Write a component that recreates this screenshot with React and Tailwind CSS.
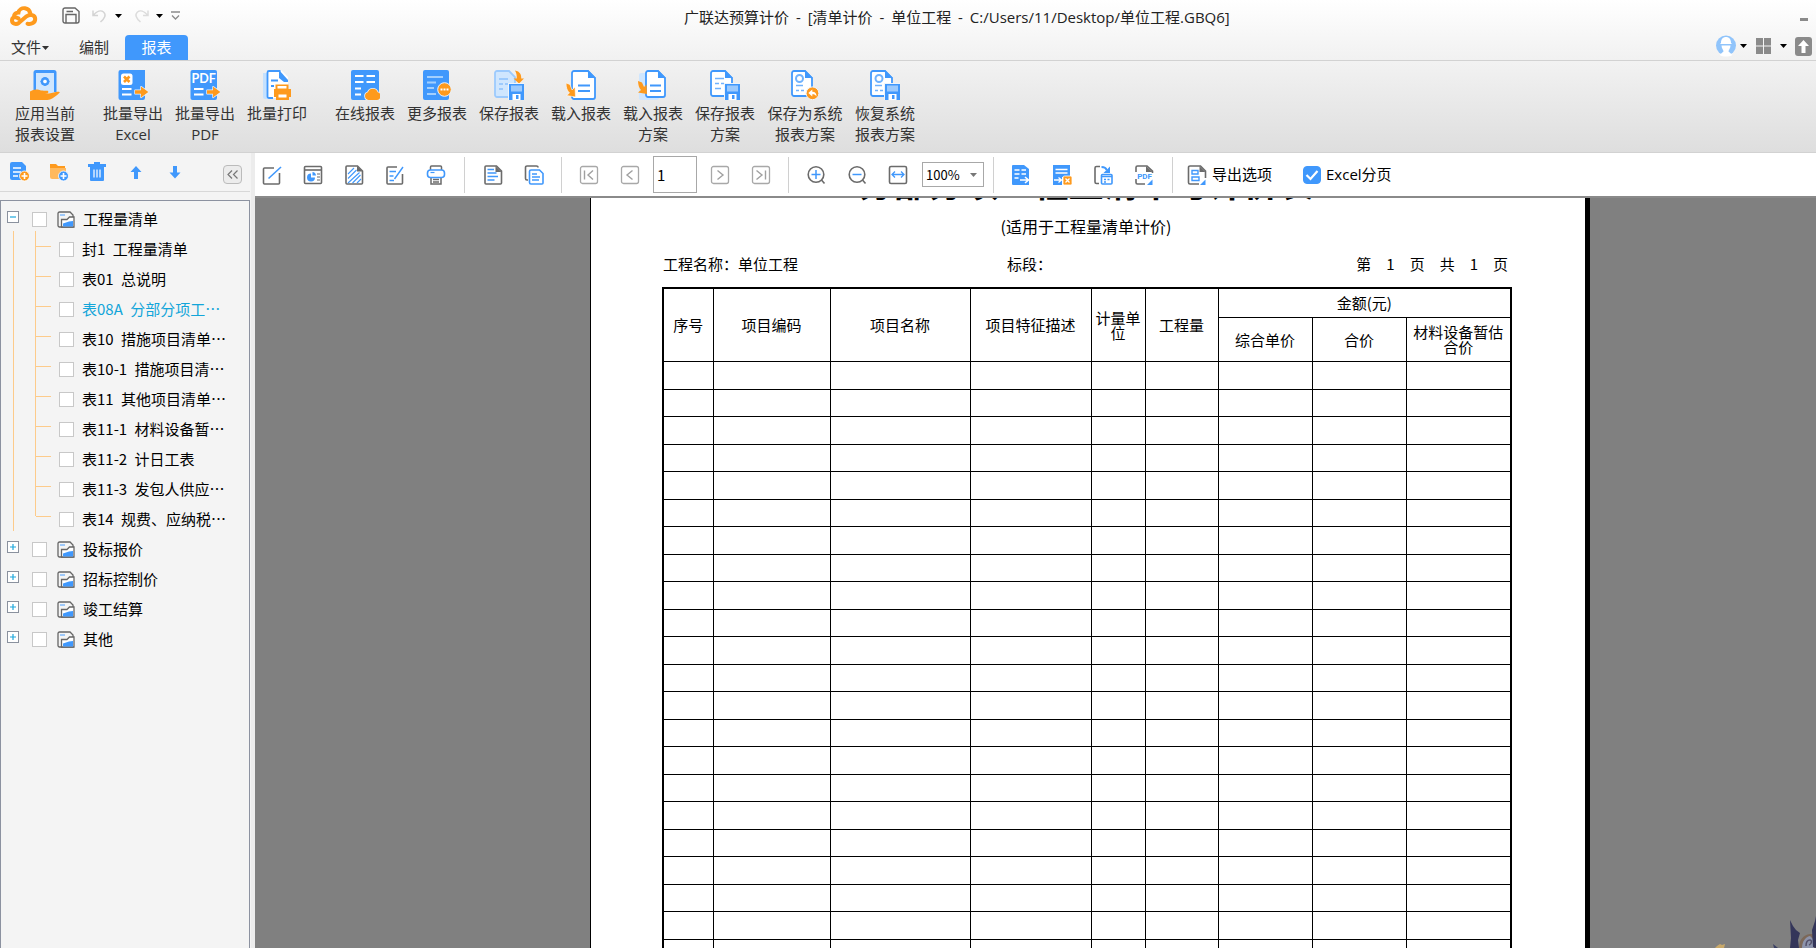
import React, { useState } from "react";

const BLUE = "#4098fc";
const ORANGE = "#fe9a1d";
const GRAY = "#6b6b6b";

const UI_FONT = "font-['Open_Sans','Noto_Sans_CJK_SC',sans-serif]";
const SONG_FONT = "font-['Noto_Sans_CJK_SC',sans-serif]";

/* ---------- ribbon icons, 30x30 ---------- */

function BigIcon({ children }) {
  return (
    <svg viewBox="0 0 30 30" className="w-[30px] h-[30px] shrink-0" fill="none" aria-hidden="true">
      {children}
    </svg>
  );
}

function Arrow() {
  return (
    <path
      d="M17 20.2h6v-3.6l7.4 5.4-7.4 5.4v-3.6h-6z"
      fill={ORANGE}
      stroke="#eaf3fd"
      strokeWidth="1.4"
      paintOrder="stroke"
      strokeLinejoin="round"
    />
  );
}

function Floppy() {
  return (
    <g>
      <rect x="14" y="13" width="17" height="18" fill="#eef4fb" />
      <rect x="15" y="14" width="15" height="16" fill={BLUE} />
      <rect x="17" y="15.5" width="11" height="6" fill="#9ccafd" />
      <rect x="18.5" y="24" width="8" height="6" fill="#fff" />
      <rect x="22" y="25" width="2.5" height="4" fill={BLUE} />
    </g>
  );
}

function FoldedDoc({ x = 0, w = 22, h = 26 }) {
  const r = x + w;
  return (
    <g>
      <path
        d={`M${x + 3} 1H${r - 7}L${r} 8V${h - 1}a2 2 0 0 1-2 2H${x + 3}a2 2 0 0 1-2-2V3a2 2 0 0 1 2-2z`}
        fill="#fff"
        stroke={BLUE}
        strokeWidth="1.8"
      />
      <path d={`M${r - 7} 0L${r + 1} 8h-8z`} fill={BLUE} />
    </g>
  );
}

const ribbonIcons = {
  apply: (
    <BigIcon>
      <path d="M6 0h18a2.5 2.5 0 0 1 2.500 2.500V22H3.500V2.500A2.500 2.500 0 0 1 6 0z" fill={BLUE} />
      <rect x="6" y="3" width="18" height="20" fill="#cfe6fe" />
      <circle cx="15" cy="11.500" r="3.200" stroke={BLUE} strokeWidth="2.400" />
      <path d="M15 7v9M10.500 11.500h9M12 8.300l6 6.400M18 8.300l-6 6.400" stroke={BLUE} strokeWidth="1.200" />
      <circle cx="15" cy="11.500" r="1.800" fill="#fff" />
      <path
        d="M0 21.500C3 19.600 6 19 9.500 20c2.500.8 4.500.7 7.500.7 1.800 0 1.800 2.300 0 2.500l-2 .3c4 .3 8-.8 11-1.500 2.500-.7 4.500-.3 3.500.8-2.500 2.500-6 5.500-9.500 6.700-3 1-8 .5-12 .5H0z"
        fill={ORANGE}
      />
    </BigIcon>
  ),
  excel: (
    <BigIcon>
      <path d="M2.500 0H21l6 0v28a2 2 0 0 1-2 2H2.500a2 2 0 0 1-2-2V2a2 2 0 0 1 2-2z" fill={BLUE} />
      <rect x="3" y="3.500" width="11.500" height="11.500" rx="2.500" fill="#fff" />
      <path d="M6 6.500l5.500 5.500M11.500 6.500L6 12" stroke={ORANGE} strokeWidth="2.600" />
      <path d="M4 19h9.500M4 24.500h9.500" stroke="#fff" strokeWidth="2" />
      <Arrow />
    </BigIcon>
  ),
  pdf: (
    <BigIcon>
      <rect x="0.500" y="0" width="26.500" height="30" rx="2" fill={BLUE} />
      <text x="13.700" y="13" textAnchor="middle" fontSize="12.500" fontWeight="700" fill="#fff" fontFamily="Lato, sans-serif">
        PDF
      </text>
      <path d="M4 19h9.500M4 24.500h9.500" stroke="#fff" strokeWidth="2" />
      <Arrow />
    </BigIcon>
  ),
  print: (
    <BigIcon>
      <path d="M1 3h5v26H3a2 2 0 0 1-2-2z" fill="#c5e1fe" />
      <path d="M7 0h12l7 7v21H7a2 2 0 0 1-2-2V2a2 2 0 0 1 2-2z" fill="#fff" />
      <path d="M18.500 1H7a1.500 1.500 0 0 0-1.500 1.500v24A1.500 1.500 0 0 0 7 28h4" stroke={BLUE} strokeWidth="1.800" />
      <path d="M17 0l9 10V12h-4L17 8z" fill={BLUE} />
      <path d="M9 10.500h7M9 16h3" stroke={BLUE} strokeWidth="1.800" />
      <rect x="13.500" y="14.500" width="13" height="5" fill={ORANGE} />
      <path d="M12 19h17v8H12z" fill={ORANGE} />
      <rect x="15.500" y="16" width="9" height="2.500" fill="#fff" />
      <rect x="14" y="23" width="13" height="7" fill={ORANGE} />
      <rect x="16.500" y="24.500" width="8" height="3" fill="#fff" />
    </BigIcon>
  ),
  online: (
    <BigIcon>
      <rect x="1" y="0" width="28" height="30" rx="2" fill={BLUE} />
      <path
        d="M5 6h8.500M16.500 6H25M5 12h8.500M16.500 12H25M5 18.500h6M5 24.500h6"
        stroke="#fff"
        strokeWidth="2"
      />
      <path
        d="M18.500 30a4 4 0 0 1-.6-7.800 5.200 5.200 0 0 1 9.800 0 4 4 0 0 1-.6 7.800z"
        fill={ORANGE}
        stroke="#eaf3fd"
        strokeWidth="1.600"
        paintOrder="stroke"
      />
    </BigIcon>
  ),
  more: (
    <BigIcon>
      <rect x="1" y="0" width="26" height="30" rx="2" fill={BLUE} />
      <path d="M5 7h16M5 12.500h9M5 18h7M5 24h9" stroke="#a3cffd" strokeWidth="1.800" />
      <circle cx="22.500" cy="19.500" r="6.800" fill={ORANGE} stroke="#eaf3fd" strokeWidth="1" />
      <path d="M18.500 19.500h2M21.500 19.500h2M24.500 19.500h2" stroke="#fff" strokeWidth="2" />
    </BigIcon>
  ),
  saveReport: (
    <BigIcon>
      <path d="M3 1h12l6 6v20H3a2 2 0 0 1-2-2V3a2 2 0 0 1 2-2z" fill="#cfe6fe" stroke="#9ccafd" strokeWidth="1.800" />
      <path d="M5 9h9M5 14h4M11 14h4M5 19h4" stroke="#9ccafd" strokeWidth="1.800" />
      <path d="M21 .5c5 1 6.500 4 6.200 8H30l-5 5-5.500-5h3.200c.3-3-.2-5-1.700-8z" fill={ORANGE} />
      <Floppy />
    </BigIcon>
  ),
  load: (
    <BigIcon>
      <FoldedDoc x={5} w={24} h={28} />
      <path d="M12 15.500h12M12 21h12" stroke={BLUE} strokeWidth="1.900" />
      <path d="M0 13l4 1.500L6 20l3-3 .5 10-9-1.500 3-2.500C1 20.500 0 17.500 0 13z" fill={ORANGE} stroke="#fff" strokeWidth=".6" />
    </BigIcon>
  ),
  loadPlan: (
    <BigIcon>
      <rect x="1" y="3" width="20" height="27" rx="2" fill="#cfe6fe" />
      <FoldedDoc x={7} w={20} h={26} />
      <path d="M12 15.500h11M12 21h11" stroke={BLUE} strokeWidth="1.900" />
      <path d="M0 11l4 1.500 2 4.500 2.500-2.500.5 9.500-9-1.500 3-2.500C1 18 .2 15 0 11z" fill={ORANGE} />
    </BigIcon>
  ),
  savePlan: (
    <BigIcon>
      <FoldedDoc w={22} h={25} />
      <path d="M5 8.500h9M5 13.500h4M11 13.500h3M5 18.500h6" stroke="#70b2fd" strokeWidth="1.600" />
      <Floppy />
    </BigIcon>
  ),
  saveSystem: (
    <BigIcon>
      <FoldedDoc x={1} w={21} h={25} />
      <circle cx="9.500" cy="8.500" r="3.500" stroke="#70b2fd" strokeWidth="2" />
      <path d="M6 15.500h7M6 20.500h3M11 20.500h3" stroke="#70b2fd" strokeWidth="1.600" />
      <circle cx="22.500" cy="23.300" r="6.400" fill={ORANGE} stroke="#eef4fb" strokeWidth="1" />
      <path d="M18.300 23l4-3.500v2.300c3 0 4.200 1.700 4.200 4.700-1-1.600-2-2.200-4.200-2.200v2.200z" fill="#fff" />
    </BigIcon>
  ),
  restore: (
    <BigIcon>
      <FoldedDoc w={22} h={25} />
      <circle cx="9" cy="8.500" r="3.500" stroke="#70b2fd" strokeWidth="2" />
      <path d="M5 15.500h7M5 20.500h3M10 20.500h3" stroke="#70b2fd" strokeWidth="1.600" />
      <Floppy />
    </BigIcon>
  ),
};

const ribbonGroups = [
  [{ icon: "apply", lines: ["应用当前", "报表设置"] }],
  [
    { icon: "excel", lines: ["批量导出", "Excel"] },
    { icon: "pdf", lines: ["批量导出", "PDF"] },
    { icon: "print", lines: ["批量打印"] },
  ],
  [
    { icon: "online", lines: ["在线报表"] },
    { icon: "more", lines: ["更多报表"] },
    { icon: "saveReport", lines: ["保存报表"] },
    { icon: "load", lines: ["载入报表"] },
    { icon: "loadPlan", lines: ["载入报表", "方案"] },
    { icon: "savePlan", lines: ["保存报表", "方案"] },
    { icon: "saveSystem", lines: ["保存为系统", "报表方案"], wide: true },
    { icon: "restore", lines: ["恢复系统", "报表方案"] },
  ],
];

/* ---------- toolbar icons, 20x20 ---------- */

function Tool({ label, children }) {
  return (
    <button type="button" aria-label={label} className="w-5 h-5 shrink-0">
      <svg viewBox="0 0 20 20" className="w-5 h-5 overflow-visible" fill="none" stroke={GRAY} strokeWidth="1.600" aria-hidden="true">
        {children}
      </svg>
    </button>
  );
}

function Divider({ className = "" }) {
  return <span className={`w-px h-9 shrink-0 bg-[#d0d0d0] ${className}`} />;
}

function Caret({ className = "" }) {
  return (
    <svg viewBox="0 0 7 4" className={`w-[7px] h-1 shrink-0 ${className}`} aria-hidden="true">
      <path d="M0 0h7L3.500 4z" fill="currentColor" />
    </svg>
  );
}

function TitleDash() {
  return <span className="mx-[3px]"> - </span>;
}

function TitleBar() {
  return (
    <div className="relative flex items-center h-[31px] px-2">
      <svg viewBox="0 0 30 22" className="w-[30px] h-[22px]" fill="none" stroke={ORANGE} strokeWidth="4" strokeLinecap="round" aria-label="logo">
        <path d="M10.500 13.500C7 11 4 12.500 4 15.500c0 3.300 4 4.500 7 2.300l7.500-6.500c3.500-2.600 8.700-1.300 8.700 2.700 0 3.800-3.700 5.500-7.700 4.700" />
        <path d="M6 11.500C6 9 8 7.500 10.500 7.500 11 4.500 14 2.800 17 3.200c2.700.4 4.700 2.300 5.300 5" />
      </svg>
      <button type="button" aria-label="保存" className="ml-6">
        <svg viewBox="0 0 18 17" className="w-[18px] h-[17px]" fill="none" stroke="#666" strokeWidth="1.400" aria-hidden="true">
          <path d="M3 1h10l4 3.500V14a2 2 0 0 1-2 2H3a2 2 0 0 1-2-2V3a2 2 0 0 1 2-2z" />
          <path d="M4 16V7.500h10V16M4.500 4.500H11" />
        </svg>
      </button>
      <button type="button" aria-label="撤销" className="ml-3 flex items-center gap-2">
        <svg viewBox="0 0 15 14" className="w-[15px] h-[14px]" fill="none" stroke="#d4d4d4" strokeWidth="1.500" aria-hidden="true">
          <path d="M1 1.500v5h5M1.500 6C5 2 9 1 11.500 3c3 2.500 1.500 6-3 10" />
        </svg>
        <Caret />
      </button>
      <button type="button" aria-label="恢复" className="ml-3 flex items-center gap-[7px]">
        <svg viewBox="0 0 15 14" className="w-[15px] h-[14px]" fill="none" stroke="#dcdcdc" strokeWidth="1.500" aria-hidden="true">
          <path d="M14 1.500v5H9M13.500 6C10 2 6 1 3.500 3 .5 5.500 2 9 6.500 13" />
        </svg>
        <Caret />
      </button>
      <button type="button" aria-label="自定义" className="ml-2">
        <svg viewBox="0 0 9 9" className="w-[9px] h-[9px]" fill="none" stroke="#8a8a8a" strokeWidth="1.300" aria-hidden="true">
          <path d="M0 1h9M1 4.500l3.500 3.500L8 4.500" />
        </svg>
      </button>
      <h1 className="absolute left-[684px] top-[6px] text-[15px] leading-[22px] text-[#222] whitespace-pre">
        广联达预算计价<TitleDash />[清单计价<TitleDash />单位工程<TitleDash />C:/Users/11/Desktop/单位工程.GBQ6]
      </h1>
      <button type="button" aria-label="最小化" className="ml-auto mt-2 w-2 h-[3px] bg-[#8a8a8a]" />
    </div>
  );
}

function TabBar() {
  return (
    <div className="flex items-end h-[29px] text-[15px] leading-[25px] text-[#333]">
      <button type="button" className="ml-[11px] flex items-center">
        文件
        <Caret className="ml-px" />
      </button>
      <button type="button" className="ml-[30px]">编制</button>
      <button type="button" className="ml-4 w-[63px] h-[25px] bg-[#4098fc] text-white rounded-t">报表</button>
      <div className="ml-auto mr-1 pb-[3px] flex items-center text-black">
        <svg viewBox="0 0 20 22" className="w-5 h-[22px] mr-1" aria-label="用户">
          <circle cx="10" cy="10.500" r="10" fill="#90c4fb" />
          <path d="M5 8c0-4 2-6 5-6s5 2 5 6l1 1H4z" fill="#fff" />
          <path d="M5.500 10.500h9c0 3-2 4.500-2 6l4 3.500c-4 2-9 2-13 0l4-3.500c0-1.500-2-3-2-6z" fill="#fff" />
        </svg>
        <Caret />
        <svg viewBox="0 0 15 16" className="w-[15px] h-4 mx-[9px]" fill="#8a8a8a" aria-label="布局">
          <path d="M0 0h7v7.500H0zM8 0h7v7.500H8zM0 8.500h7V16H0zM8 8.500h7V16H8z" />
        </svg>
        <Caret />
        <svg viewBox="0 0 17 19" className="w-[17px] h-[19px] ml-2" aria-label="收起">
          <rect width="17" height="19" rx="3" fill="#8a8a8a" />
          <path d="M8.500 3l5.500 6h-3.500v7h-4V9H3z" fill="#fff" />
        </svg>
      </div>
    </div>
  );
}

function Ribbon() {
  return (
    <div className="flex h-[93px] pt-[9px] pl-[9px] gap-4 shrink-0 border-y border-[#d2d2d2] bg-gradient-to-b from-[#f2f2f2] to-[#dedede] text-[15px] leading-[21px] text-[#333]">
      {ribbonGroups.map((group, gi) => (
        <div key={gi} className="flex">
          {group.map((item) => (
            <button
              key={item.icon}
              type="button"
              className={`flex flex-col items-center gap-[3px] whitespace-nowrap ${item.wide ? "w-[88px]" : "w-[72px]"}`}
            >
              {ribbonIcons[item.icon]}
              <span>
                {item.lines.map((line) => (
                  <span key={line} className="block">{line}</span>
                ))}
              </span>
            </button>
          ))}
        </div>
      ))}
    </div>
  );
}

/* ---------- sidebar ---------- */

const reports = [
  ["封1", "工程量清单"],
  ["表01", "总说明"],
  ["表08A", "分部分项工…"],
  ["表10", "措施项目清单…"],
  ["表10-1", "措施项目清…"],
  ["表11", "其他项目清单…"],
  ["表11-1", "材料设备暂…"],
  ["表11-2", "计日工表"],
  ["表11-3", "发包人供应…"],
  ["表14", "规费、应纳税…"],
];

function TreeBox() {
  return (
    <input type="checkbox" className="appearance-none w-[15px] h-[15px] shrink-0 bg-white border border-[#c8c8c8]" />
  );
}

function TreeFolder({ name, open }) {
  return (
    <div className="flex items-center h-[30px]">
      <button type="button" aria-label={open ? "折叠" : "展开"} className="ml-[6px] pt-[2px]">
        <svg viewBox="0 0 12 12" className="w-3 h-3" fill="#fff" stroke="#8a919e" aria-hidden="true">
          <rect x=".5" y=".5" width="11" height="11" />
          <path d={open ? "M3 6h6" : "M3 6h6M6 3v6"} stroke="#1ea7dc" strokeWidth="1.200" />
        </svg>
      </button>
      <label className="ml-[13px] pt-[6px] flex items-center">
        <TreeBox />
        <svg viewBox="0 0 18 17" className="w-[18px] h-[17px] ml-[10px] mr-2" fill="#fff" stroke="#666" strokeWidth="1.300" aria-hidden="true">
          <path d="M2.500 1H13l3 3v12H2.500A1.500 1.500 0 0 1 1 14.500v-12A1.500 1.500 0 0 1 2.500 1z" fill="#f4f4f4" />
          <path d="M3 4h5" stroke="#70b2fd" />
          <path d="M4.500 16V8.500H10L12.500 6H17v10z" />
          <path d="M6 15.500v-3l6-2 4-.5v5.500z" fill={BLUE} stroke="none" />
        </svg>
        {name}
      </label>
    </div>
  );
}

function Sidebar() {
  const [active, setActive] = useState(2);

  return (
    <aside className="w-[255px] shrink-0 flex flex-col bg-[#f4f4f4] border-r-4 border-[#ececec]">
      <div className="flex items-center h-[39px] w-[250px] pl-[10px] pr-2 gap-[19px] border-b border-[#d8d8d8] shrink-0">
        <Tool label="新建报表">
          <path d="M2 0h10l4 4v14H2a2 2 0 0 1-2-2V2a2 2 0 0 1 2-2z" fill={BLUE} stroke="none" />
          <path d="M3 6h8M3 10h8M3 14h5" stroke="#fff" strokeWidth="1.300" />
          <circle cx="14.500" cy="14" r="5" fill={ORANGE} stroke="#fff" strokeWidth=".8" />
          <path d="M11.500 14h6M14.500 11v6" stroke="#fff" />
        </Tool>
        <Tool label="新建文件夹">
          <path d="M1 2h6l2 2h7v2H1z" fill={ORANGE} stroke="none" />
          <path d="M1 6h16v11H3a2 2 0 0 1-2-2z" fill="#ffb95d" stroke="none" />
          <circle cx="14.500" cy="14" r="5" fill={BLUE} stroke="#fff" strokeWidth=".8" />
          <path d="M11.500 14h6M14.500 11v6" stroke="#fff" />
        </Tool>
        <Tool label="删除">
          <path d="M6 0h6v2h6v3h-2v13a1 1 0 0 1-1 1H3a1 1 0 0 1-1-1V5H0V2h6z" fill={BLUE} stroke="none" />
          <path d="M6 7.500v8M9 7.500v8M12 7.500v8" stroke="#fff" strokeWidth="1.200" />
        </Tool>
        <Tool label="上移">
          <path d="M9 4l5.500 6H11v7H7v-7H3.500z" fill={BLUE} stroke="none" />
        </Tool>
        <Tool label="下移">
          <path d="M9 16.500l5.500-6H11V4H7v6.500H3.500z" fill={BLUE} stroke="none" />
        </Tool>
        <button type="button" aria-label="收起侧栏" className="ml-auto mt-1 w-[19px] h-[19px] rounded border border-[#bbb] bg-[#ececec]">
          <svg viewBox="0 0 17 17" className="w-[17px] h-[17px]" fill="none" stroke="#777" strokeWidth="1.200" aria-hidden="true">
            <path d="M8 4.500l-4 4 4 4M13.500 4.500l-4 4 4 4" />
          </svg>
        </button>
      </div>
      <div className={`mt-2 flex-1 w-[250px] border border-b-0 border-[#8c92a0] text-[15px] leading-5 text-black whitespace-nowrap ${SONG_FONT}`}>
        <TreeFolder name="工程量清单" open />
        <div className="ml-3 pl-[21px] border-l border-[#fdcb8b]">
          <ul>
            {reports.map(([code, title], i) => (
              <li key={code} className="flex items-center h-[30px]">
                <span className={`w-px self-start bg-[#fdcb8b] ${i === reports.length - 1 ? "h-[15px]" : "h-full"}`} />
                <span className="w-[15px] h-px bg-[#fdcb8b]" />
                <label
                  className={`ml-2 pt-[6px] flex items-center gap-2 ${i === active ? "text-[#12a5d9]" : ""}`}
                  onClick={() => setActive(i)}
                >
                  <TreeBox />
                  <span>
                    {code} <span className="ml-1">{title}</span>
                  </span>
                </label>
              </li>
            ))}
          </ul>
        </div>
        <TreeFolder name="投标报价" />
        <TreeFolder name="招标控制价" />
        <TreeFolder name="竣工结算" />
        <TreeFolder name="其他" />
      </div>
    </aside>
  );
}

/* ---------- report viewer ---------- */

function NavBox({ label, d }) {
  return (
    <Tool label={label}>
      <rect x="1.500" y="1.500" width="17" height="17" rx="2" stroke="#a8a8a8" strokeWidth="1.300" />
      <path d={d} stroke="#a0a0a0" strokeWidth="1.400" />
    </Tool>
  );
}

function ViewerToolbar() {
  const [page, setPage] = useState("1");
  const [paging, setPaging] = useState(true);

  return (
    <div className="flex items-center h-[45px] pl-[7px] shrink-0 bg-white border-b-2 border-[#8a8a8a] text-[15px] text-black whitespace-nowrap">
      <div className="flex items-center gap-[21px]">
        <Tool label="编辑">
          <path d="M12 3H2.500A1 1 0 0 0 1.500 4v14a1 1 0 0 0 1 1h14a1 1 0 0 0 1-1V8" />
          <path d="M6.500 13.500L19 2" stroke={BLUE} />
        </Tool>
        <Tool label="报表设计">
          <rect x="1.500" y="1.500" width="17" height="17" rx="1" />
          <path d="M2 5h16" />
          <path d="M8 8.500a4 4 0 1 0 4 4H8z" fill={BLUE} stroke="none" />
          <path d="M9.500 7a4 4 0 0 1 3.500 3.500H9.500z" fill={BLUE} stroke="none" />
          <path d="M14 9h3M14 12h3M14 15h3" strokeWidth="1.200" />
        </Tool>
        <Tool label="水印">
          <path d="M3 1h10.500L18.500 6v12a1 1 0 0 1-1 1H3a1 1 0 0 1-1-1V2a1 1 0 0 1 1-1z" />
          <path d="M13 1v5.500h5.500z" fill={GRAY} stroke="none" />
          <path d="M4 9l6-6M4 13.500L12.500 5M4 18L15.500 7.500M8.500 18l8-8M13 18l4-4" stroke={BLUE} strokeWidth="1.100" />
        </Tool>
        <Tool label="批注">
          <path d="M12 2H3a1 1 0 0 0-1 1v15a1 1 0 0 0 1 1h13.500a1 1 0 0 0 1-1V9" />
          <path d="M9.500 14l8.500-12M4.500 6.500H11M4.500 11h4M4.500 15.500H9" stroke={BLUE} strokeWidth="1.400" />
        </Tool>
        <Tool label="打印">
          <path d="M4.500 5V2a1 1 0 0 1 1-1h9a1 1 0 0 1 1 1v3M5 13v6h10v-6M7 14.500h6M7 17h6" strokeWidth="1.500" />
          <rect x="1.500" y="5" width="17" height="7.500" rx="3" stroke={BLUE} fill="#fff" />
          <path d="M4.500 7.500h4" stroke={BLUE} strokeWidth="1.200" />
        </Tool>
      </div>
      <Divider className="mx-[18px]" />
      <div className="flex items-center gap-[21px]">
        <Tool label="单页">
          <path d="M3 1h10.500L18.500 6v12a1 1 0 0 1-1 1H3a1 1 0 0 1-1-1V2a1 1 0 0 1 1-1z" />
          <path d="M12.500 1v6h6z" fill={GRAY} stroke="none" />
          <path d="M4.500 4.500H11M4.500 8h9M4.500 11.500H15M4.500 15h7" stroke={BLUE} strokeWidth="1.300" />
        </Tool>
        <Tool label="多页">
          <path d="M4 15H3a1.500 1.500 0 0 1-1.500-1.500v-11A1.500 1.500 0 0 1 3 1h9.500a1.500 1.500 0 0 1 1.500 1.500" />
          <path d="M7 5h8.500L19 8.500V18a1 1 0 0 1-1 1H7a1.500 1.500 0 0 1-1.500-1.500v-11A1.500 1.500 0 0 1 7 5z" fill="#fff" stroke={BLUE} />
          <path d="M8 9h5M8 12h8M8 15h7" stroke={BLUE} strokeWidth="1.300" />
        </Tool>
      </div>
      <Divider className="mx-[17px]" />
      <div className="flex items-center gap-[21px]">
        <NavBox label="首页" d="M5.500 5.500v9M14 5.500L9 10l5 4.500" />
        <NavBox label="上一页" d="M12.500 5.500L7 10l5.500 4.500" />
      </div>
      <input
        aria-label="页码"
        value={page}
        onChange={(e) => setPage(e.target.value)}
        className={`mx-[13px] w-[44px] h-[37px] pl-[3px] border border-[#a8a8a8] text-[15px] outline-none ${SONG_FONT}`}
      />
      <div className="flex items-center gap-[21px]">
        <NavBox label="下一页" d="M7.500 5.500L13 10l-5.500 4.500" />
        <NavBox label="末页" d="M5.500 5.500L11 10l-5.500 4.500M14.500 5.500v9" />
      </div>
      <Divider className="mx-[17px]" />
      <div className="flex items-center gap-[21px]">
        <Tool label="放大">
          <circle cx="10" cy="9.500" r="7.800" />
          <path d="M15.500 15l3 3.500" />
          <path d="M5.500 9.500h9M10 5v9" stroke={BLUE} strokeWidth="1.500" />
        </Tool>
        <Tool label="缩小">
          <circle cx="10" cy="9.500" r="7.800" />
          <path d="M15.500 15l3 3.500" />
          <path d="M5.500 9.500h9" stroke={BLUE} strokeWidth="1.500" />
        </Tool>
        <Tool label="适合页宽">
          <rect x="1.500" y="1.500" width="17" height="17" rx="1.500" />
          <path d="M4 9.500h12M7 6.500l-3 3 3 3M13 6.500l3 3-3 3" stroke={BLUE} strokeWidth="1.300" />
        </Tool>
      </div>
      <div className="relative ml-[14px]">
        <select
          aria-label="缩放比例"
          defaultValue="100"
          className={`appearance-none block w-[62px] h-[25px] pl-[3px] border border-[#a8a8a8] bg-white text-[13px] outline-none ${SONG_FONT}`}
        >
          <option value="50">50%</option>
          <option value="100">100%</option>
          <option value="200">200%</option>
        </select>
        <Caret className="absolute right-[7px] top-[11px] text-[#777] pointer-events-none" />
      </div>
      <Divider className="ml-[9px] mr-[17px]" />
      <div className="flex items-center gap-[21px]">
        <Tool label="导出Excel">
          <path d="M2 0h11l5 4v16H2a1 1 0 0 1-1-1V1a1 1 0 0 1 1-1z" fill={BLUE} stroke="none" />
          <path d="M3.500 5h5M10.500 5H15M3.500 9h5M10.500 9H15M3.500 13h4" stroke="#fff" strokeWidth="1.300" />
          <path d="M9 15h8M14 12l3.500 3-3.500 3" stroke="#fff" />
        </Tool>
        <Tool label="导出到已有Excel">
          <path d="M1 0h17v12H1z" fill={BLUE} stroke="none" />
          <path d="M1 12h9v8H1z" fill={BLUE} stroke="none" />
          <path d="M3.500 4.500h12M3.500 8h12M2 15h7M6.500 12.500l3 2.500-3 2.500" stroke="#fff" strokeWidth="1.300" />
          <rect x="11" y="11" width="9" height="9" rx="1.500" fill={ORANGE} stroke="#fff" strokeWidth=".8" />
          <path d="M13.500 13.500l4 4M17.500 13.500l-4 4" stroke="#fff" strokeWidth="1.300" />
        </Tool>
        <Tool label="转换表格">
          <path d="M7 1.500H3.500a1.500 1.500 0 0 0-1.500 1.500v14a1.500 1.500 0 0 0 1.500 1.500H6" />
          <path d="M8.500 2c3 0 4.500 1 5 3" stroke={BLUE} strokeWidth="2" />
          <path d="M17 1.500V8h-6.500z" fill={BLUE} stroke="none" />
          <rect x="8.500" y="9.500" width="10.500" height="9.500" rx="1" stroke={BLUE} />
          <path d="M8.500 11.500h10.500M11 14.500h2M14.500 14.500h2M11 17h2" stroke={BLUE} strokeWidth="1.300" />
        </Tool>
        <Tool label="导出PDF">
          <path d="M2 7V2.500A1.500 1.500 0 0 1 3.500 1H13l5.500 5v2M2 14v3.500A1.500 1.500 0 0 0 3.500 19H11" />
          <path d="M12 1v6h6.500z" fill={GRAY} stroke="none" />
          <text x="10.500" y="13.500" textAnchor="middle" fontSize="8" fontWeight="700" fill={BLUE} stroke="none" fontFamily="Roboto, sans-serif">
            PDF
          </text>
          <path d="M18.500 14.500V20H13l2-2z" fill={BLUE} stroke="none" />
        </Tool>
      </div>
      <Divider className="ml-[18px] mr-[14px]" />
      <button type="button" className="flex items-center gap-[5px]">
        <svg viewBox="0 0 20 20" className="w-5 h-5" fill="none" stroke={GRAY} strokeWidth="1.600" aria-hidden="true">
          <path d="M18.500 13V6l-5-5H3a1.500 1.500 0 0 0-1.500 1.500v15A1.500 1.500 0 0 0 3 19h9" />
          <path d="M12.500 1v6h6z" fill={GRAY} stroke="none" />
          <path d="M5 5.500h6v3.500H5zM5 12h7v3.500H5z" stroke={BLUE} strokeWidth="1.400" />
          <path d="M18.500 14.500V20H13l2-2z" fill={BLUE} stroke="none" />
        </svg>
        导出选项
      </button>
      <label className="ml-[31px] flex items-center gap-[5px]">
        <span className="grid">
          <input
            type="checkbox"
            checked={paging}
            onChange={(e) => setPaging(e.target.checked)}
            className="peer appearance-none col-start-1 row-start-1 w-[18px] h-[18px] rounded-sm border border-[#4098fc] checked:bg-[#4098fc]"
          />
          <svg viewBox="0 0 18 18" className="col-start-1 row-start-1 w-[18px] h-[18px] pointer-events-none invisible peer-checked:visible" fill="none" stroke="#fff" strokeWidth="2.200" aria-hidden="true">
            <path d="M3.500 9l4 4L14.500 5" />
          </svg>
        </span>
        Excel分页
      </label>
    </div>
  );
}

const emptyRows = Array.from({ length: 26 }, (_, i) => i);
const cell = "border border-black p-0 font-normal text-center";

function ReportPage() {
  return (
    <div className={`w-[1000px] shrink-0 bg-white border-l border-r-[5px] border-black text-[15px] leading-5 text-black ${SONG_FONT}`}>
      <h2 className="-mt-[34px] pr-1 text-center text-[35px] leading-[35px] font-bold">分部分项工程量清单与计价表</h2>
      <p className="mt-[17px] pr-1 text-center text-base leading-5">(适用于工程量清单计价)</p>
      <div className="mt-[18px] ml-[72px] mr-[77px] grid grid-cols-[344px_1fr_auto]">
        <span>工程名称：单位工程</span>
        <span>标段：</span>
        <span className="flex gap-[15px]">
          <span>第</span>
          <span>1</span>
          <span>页</span>
          <span>共</span>
          <span>1</span>
          <span>页</span>
        </span>
      </div>
      <table className="mt-[13px] ml-[71px] w-[850px] table-fixed border-collapse border-2 border-black leading-[15px]">
        <colgroup>
          <col className="w-[50px]" />
          <col className="w-[117px]" />
          <col className="w-[140px]" />
          <col className="w-[121px]" />
          <col className="w-[54px]" />
          <col className="w-[73px]" />
          <col className="w-[94px]" />
          <col className="w-[94px]" />
          <col className="w-[105px]" />
        </colgroup>
        <thead>
          <tr className="h-[29px]">
            <th rowSpan={2} className={cell}>序号</th>
            <th rowSpan={2} className={cell}>项目编码</th>
            <th rowSpan={2} className={cell}>项目名称</th>
            <th rowSpan={2} className={cell}>项目特征描述</th>
            <th rowSpan={2} className={cell}>计量单位</th>
            <th rowSpan={2} className={cell}>工程量</th>
            <th colSpan={3} className={cell}>金额(元)</th>
          </tr>
          <tr className="h-11">
            <th className={cell}>综合单价</th>
            <th className={cell}>合价</th>
            <th className={cell}>材料设备暂估合价</th>
          </tr>
        </thead>
        <tbody>
          {emptyRows.map((r) => (
            <tr key={r} className="h-[27px] odd:h-[28px]">
              {Array.from({ length: 9 }, (_, c) => (
                <td key={c} className={cell} />
              ))}
            </tr>
          ))}
        </tbody>
      </table>
    </div>
  );
}

export default function App() {
  return (
    <div className={`h-screen flex flex-col overflow-hidden bg-white ${UI_FONT}`}>
      <header className="shrink-0 bg-gradient-to-b from-white to-[#f1f1f1]">
        <TitleBar />
        <TabBar />
      </header>
      <Ribbon />
      <div className="flex flex-1 min-h-0">
        <Sidebar />
        <main className="relative flex-1 min-w-0 flex flex-col">
          <ViewerToolbar />
          <div className="flex-1 min-h-0 flex items-start overflow-hidden bg-[#808080] pl-[335px]">
            <ReportPage />
          </div>
          {/* castle mascot peeking in at the corner */}
          <svg viewBox="0 0 104 32" className="absolute right-0 bottom-0 w-[104px] h-8" aria-hidden="true">
            <path d="M3 32l2-2 3-2 2 1 3-1-1 4z" fill="#c9a96a" />
            <path d="M62 32l-1-4 5 4z" fill="#3a3f63" />
            <path d="M78 32l1-10-1-18 3 6 3 4 4 3-2 7 1 8z" fill="#34365a" />
            <path d="M87 32c0-8 4-13 11-14h6v14z" fill="#7c6858" />
            <path d="M90 32c0-6 3-11 8-12l4 4v8z" fill="#8c93ab" />
            <path d="M94 30c0-4 2-6 4-6s2 4-1 5" fill="none" stroke="#54506a" strokeWidth="1.500" />
            <path d="M100 14l3-9 1-5v32l-3-1z" fill="#34365a" />
          </svg>
        </main>
      </div>
    </div>
  );
}
